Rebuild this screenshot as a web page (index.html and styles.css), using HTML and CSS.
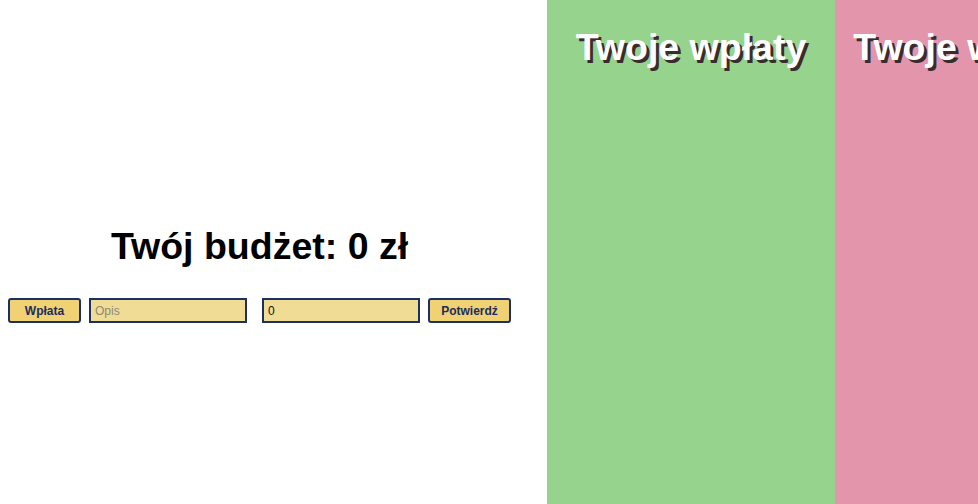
FILE: index.html
```html
<!DOCTYPE html>
<html lang="pl">
<head>
<meta charset="utf-8">
<title>Budżet</title>
<link rel="stylesheet" href="styles.css">
</head>
<body>
<main class="app">
  <section class="budget">
    <div class="budget-inner">
      <h1 class="budget-title">Twój budżet: 0 zł</h1>
      <form class="controls">
        <button type="button" class="btn btn-type">Wpłata</button>
        <input type="text" class="field field-desc" placeholder="Opis">
        <input type="text" class="field field-amount" value="0">
        <button type="button" class="btn btn-confirm">Potwierdź</button>
      </form>
    </div>
  </section>
  <section class="column column-income">
    <h2 class="column-title">Twoje wpłaty</h2>
  </section>
  <section class="column column-expense">
    <h2 class="column-title">Twoje wydatki</h2>
  </section>
</main>
</body>
</html>
```
FILE: styles.css
```css
html, body {
  margin: 0;
  padding: 0;
  height: 100%;
  overflow: hidden;
  background: #ffffff;
  font-family: "Liberation Sans", Arial, sans-serif;
}

.app {
  display: flex;
  height: 504px;
}

.budget {
  width: 547px;
  flex-shrink: 0;
  padding-left: 8px;
  box-sizing: border-box;
}

.budget-inner {
  width: 503px;
  padding-top: 225px;
}

.budget-title {
  margin: 0;
  text-align: center;
  font-size: 37.5px;
  line-height: 42px;
  font-weight: bold;
  color: #000;
}

.controls {
  display: flex;
  align-items: center;
  margin-top: 31px;
  height: 25px;
}

.btn {
  box-sizing: border-box;
  height: 25px;
  padding: 0;
  border: 2px solid #1b3162;
  border-radius: 3px;
  background: #f0d173;
  color: #1b2d5c;
  font-family: "Liberation Sans", Arial, sans-serif;
  font-weight: bold;
  font-size: 12px;
}

.btn-type {
  width: 73px;
}

.btn-confirm {
  width: 83px;
  margin-left: 8px;
}

.field {
  box-sizing: border-box;
  height: 25px;
  width: 158px;
  padding: 0 4px;
  border: 2px solid #1b3162;
  border-radius: 0;
  background: #f0dc94;
  color: #111;
  font-family: "Liberation Sans", Arial, sans-serif;
  font-size: 12px;
  outline: none;
}

.field::placeholder {
  color: #8a8a7a;
}

.field-desc {
  margin-left: 8px;
}

.field-amount {
  margin-left: 15px;
}

.column {
  width: 288px;
  flex-shrink: 0;
  height: 504px;
}

.column-income {
  background: #96d38c;
}

.column-expense {
  background: #e295ab;
}

.column-title {
  margin: 26px 0 0;
  text-align: center;
  color: #ffffff;
  font-size: 37.5px;
  line-height: 42px;
  font-weight: bold;
  white-space: nowrap;
  text-shadow: 3px 3px 0 #3a2b2e;
}
```
